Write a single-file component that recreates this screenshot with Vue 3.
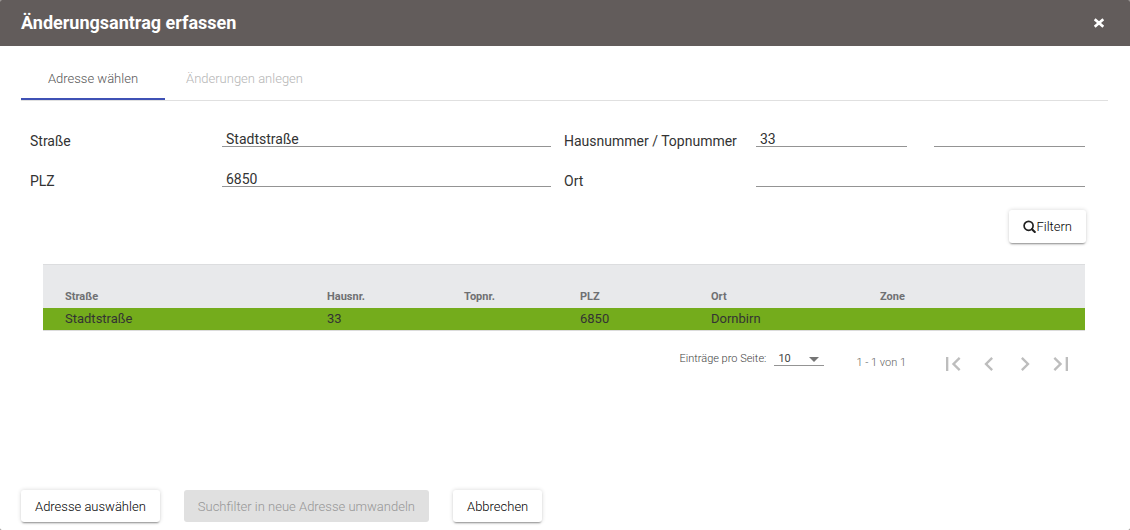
<script setup>
import { ref } from 'vue'

const street = ref('Stadtstraße')
const house = ref('33')
const door = ref('')
const zip = ref('6850')
const city = ref('')
const pageSize = ref('10')

const columns = [
  { key: 'street', label: 'Straße' },
  { key: 'house', label: 'Hausnr.' },
  { key: 'door', label: 'Topnr.' },
  { key: 'zip', label: 'PLZ' },
  { key: 'city', label: 'Ort' },
  { key: 'zone', label: 'Zone' },
]
const rows = [
  { street: 'Stadtstraße', house: '33', door: '', zip: '6850', city: 'Dornbirn', zone: '' },
]
const pagers = [
  { label: 'Erste Seite', path: 'M18.41 16.59L13.82 12l4.59-4.59L17 6l-6 6 6 6zM6 6h2v12H6z' },
  { label: 'Vorherige Seite', path: 'M15.41 7.41L14 6l-6 6 6 6 1.41-1.41L10.83 12z' },
  { label: 'Nächste Seite', path: 'M10 6L8.59 7.41 13.17 12l-4.58 4.59L10 18l6-6z' },
  { label: 'Letzte Seite', path: 'M5.59 7.41L10.18 12l-4.59 4.59L7 18l6-6-6-6zM16 6h2v12h-2z' },
]
</script>

<template>
  <div class="dialog" role="dialog" aria-labelledby="dialog-title">
    <header class="head">
      <h1 id="dialog-title">Änderungsantrag erfassen</h1>
      <button class="close" type="button" aria-label="Schließen">
        <svg viewBox="0 0 12 12" width="12" height="12">
          <path d="M1.7 2.2L10.3 9.8M10.3 2.2L1.7 9.8" stroke="#fff" stroke-width="2.7" />
        </svg>
      </button>
    </header>

    <main class="body">
      <div class="tabs" role="tablist">
        <button class="tab active" type="button" role="tab" aria-selected="true">Adresse wählen</button>
        <button class="tab" type="button" role="tab" aria-selected="false" disabled>Änderungen anlegen</button>
      </div>

      <form class="panel" @submit.prevent>
        <div class="fields">
          <div class="field">
            <label for="street">Straße</label>
            <input id="street" v-model="street" type="text" />
          </div>
          <div class="field">
            <label for="house">Hausnummer / Topnummer</label>
            <div class="pair">
              <input id="house" v-model="house" type="text" />
              <input v-model="door" type="text" aria-label="Topnummer" />
            </div>
          </div>
          <div class="field">
            <label for="zip">PLZ</label>
            <input id="zip" v-model="zip" type="text" />
          </div>
          <div class="field">
            <label for="city">Ort</label>
            <input id="city" v-model="city" type="text" />
          </div>
        </div>

        <div class="filter">
          <button class="btn" type="submit">
            <svg viewBox="0 0 13 13" width="13" height="13" aria-hidden="true">
              <circle cx="5.6" cy="5.8" r="4.5" fill="none" stroke="#212121" stroke-width="1.7" />
              <path d="M9 9.2L11.8 12" stroke="#212121" stroke-width="2.1" stroke-linecap="round" />
            </svg>Filtern
          </button>
        </div>
      </form>

      <table class="results">
        <thead>
          <tr>
            <th v-for="c in columns" :key="c.key" :class="c.key" scope="col">{{ c.label }}</th>
          </tr>
        </thead>
        <tbody>
          <tr v-for="(r, i) in rows" :key="i">
            <td v-for="c in columns" :key="c.key">{{ r[c.key] }}</td>
          </tr>
        </tbody>
      </table>

      <div class="paging">
        <label for="size">Einträge pro Seite:</label>
        <div class="size">
          <select id="size" v-model="pageSize">
            <option>10</option>
            <option>20</option>
            <option>50</option>
          </select>
          <svg class="arrow" viewBox="0 0 10 5" width="10" height="5" aria-hidden="true">
            <path d="M0 0h10L5 5z" fill="#757575" />
          </svg>
        </div>
        <span class="range">1 - 1 von 1</span>
        <div class="pagers">
          <button v-for="p in pagers" :key="p.label" type="button" disabled :aria-label="p.label">
            <svg viewBox="0 0 24 24" width="28" height="28"><path :d="p.path" fill="#bdbdbd" /></svg>
          </button>
        </div>
      </div>
    </main>

    <footer class="actions">
      <button class="btn" type="button">Adresse auswählen</button>
      <button class="btn" type="button" disabled>Suchfilter in neue Adresse umwandeln</button>
      <button class="btn" type="button">Abbrechen</button>
    </footer>
  </div>
</template>

<style>
html {
  background: #8a8786;
}
</style>

<style scoped>
.dialog,
.dialog * {
  box-sizing: border-box;
}
.dialog {
  display: flex;
  flex-direction: column;
  min-height: 100vh;
  background: #fff;
  border-radius: 2px;
  overflow: hidden;
  font-family: Roboto, "Liberation Sans", sans-serif;
  font-size: 13px;
  color: #333;
}
button,
input,
select {
  font: inherit;
  color: inherit;
  margin: 0;
  border: 0;
  border-radius: 0;
  background: none;
}
.head {
  display: flex;
  align-items: center;
  justify-content: space-between;
  height: 46px;
  padding: 0 25px 0 21px;
  background: #625c5b;
  color: #fff;
}
.head h1 {
  margin: 0;
  font-size: 18px;
  line-height: 24px;
  font-weight: 700;
}
.close {
  display: flex;
  padding: 0;
}
.body {
  flex: 1;
  padding: 10px 22px 0 21px;
}
.tabs {
  display: flex;
  height: 45px;
  border-bottom: 1px solid #e0e0e0;
}
.tab {
  min-width: 144px;
  padding: 2px 21px 0;
  border-bottom: 2px solid transparent;
  color: #555;
  font-weight: 300;
}
.tab.active {
  border-color: #3f51b5;
}
.tab:disabled {
  color: #b5b5b5;
}
.panel {
  padding: 25px 23px 0 9px;
}
.fields {
  display: grid;
  grid-template-columns: 1fr 1fr;
  column-gap: 13px;
  font-size: 14px;
}
.field {
  display: grid;
  grid-template-columns: 192px minmax(0, 1fr);
  height: 40px;
  align-items: start;
}
.field label {
  padding-top: 6px;
  line-height: 18px;
}
.field input {
  width: 100%;
  min-width: 0;
  height: 21px;
  padding: 5px 4px 0;
  border-bottom: 1px solid #949494;
  outline: none;
}
.pair {
  display: grid;
  grid-template-columns: 1fr 1fr;
  gap: 27px;
}
.filter {
  display: flex;
  justify-content: flex-end;
  margin: 4px -1px 0 0;
}
.btn {
  display: flex;
  align-items: center;
  height: 33px;
  padding: 0 14px;
  border-radius: 3px;
  background: #fff;
  color: #000;
  font-weight: 300;
  box-shadow: 0 2px 2px -1px rgba(0, 0, 0, 0.4), 0 0 4px rgba(0, 0, 0, 0.16);
}
.btn:disabled {
  background: #e0e0e0;
  color: #969696;
  box-shadow: none;
}
.results {
  width: calc(100% - 45px);
  margin: 21px 23px 0 22px;
  border-collapse: collapse;
  table-layout: fixed;
  text-align: left;
}
.results th {
  height: 43px;
  padding: 0 0 5px 22px;
  border-top: 1px solid #dcdddf;
  background: #e8e9eb;
  color: #6f7072;
  font-size: 11px;
  line-height: 13px;
  font-weight: 700;
  vertical-align: bottom;
}
.results td {
  height: 23px;
  padding: 0 0 0 22px;
  background: #74ac1c;
  border-bottom: 1px solid #dcdcdc;
  line-height: 20px;
}
.street {
  width: 262px;
}
.house {
  width: 137px;
}
.door {
  width: 116px;
}
.zip {
  width: 131px;
}
.city {
  width: 169px;
}
.zone {
  width: 227px;
}
.paging {
  display: flex;
  align-items: center;
  justify-content: flex-end;
  height: 62px;
  padding-right: 33px;
  font-size: 11px;
  color: #424242;
  font-weight: 300;
}
.paging label {
  padding-bottom: 8px;
}
.size {
  position: relative;
  width: 50px;
  margin: 0 32px 8px 8px;
}
.size select {
  display: block;
  appearance: none;
  width: 100%;
  height: 15px;
  padding: 1px 4px 0;
  border-bottom: 1px solid #949494;
  color: #444;
  font-weight: 400;
}
.arrow {
  position: absolute;
  top: 6px;
  right: 5px;
  pointer-events: none;
}
.range {
  color: #616161;
}
.pagers {
  display: flex;
  gap: 8px;
  margin-left: 33px;
}
.pagers button {
  display: flex;
  padding: 4px 0 0;
}
.actions {
  display: flex;
  gap: 24px;
  padding: 0 21px 8px;
}
.actions .btn {
  height: 32px;
}
</style>
